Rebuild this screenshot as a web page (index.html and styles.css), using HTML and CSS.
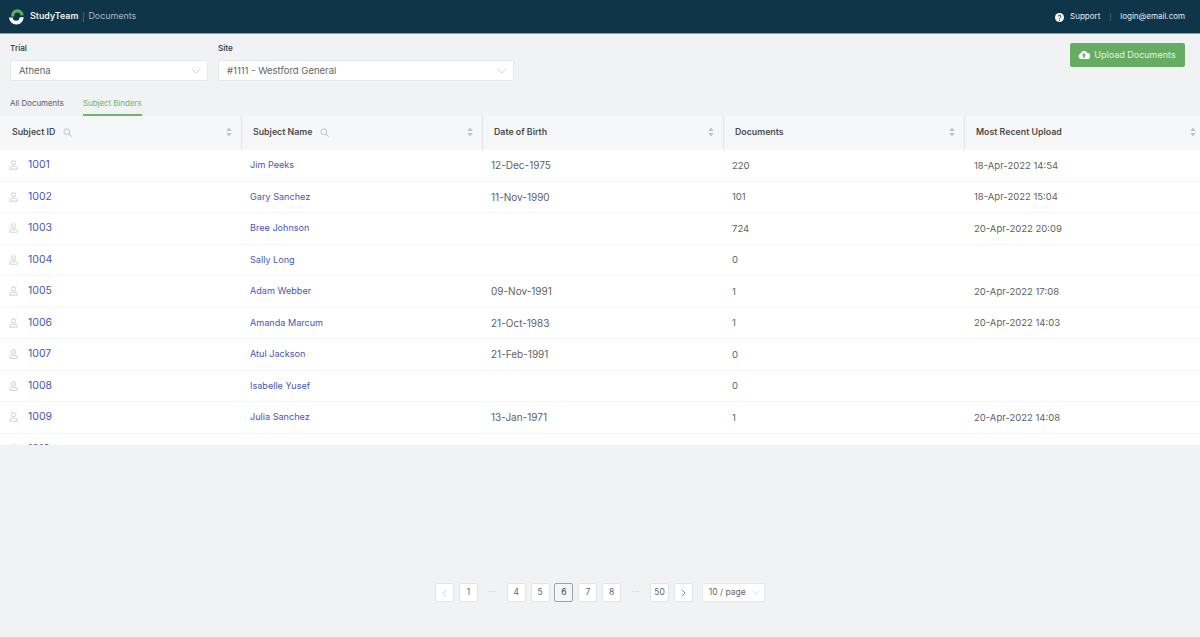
FILE: index.html
```html
<!DOCTYPE html>
<html lang="en">
<head>
<meta charset="utf-8">
<title>StudyTeam Documents</title>
<link rel="stylesheet" href="styles.css">
</head>
<body>
<svg class="defs" width="0" height="0" aria-hidden="true">
  <symbol id="user" viewBox="0 0 10 11"><circle cx="5" cy="3" r="2.3" fill="none" stroke="currentColor" stroke-width=".8"/><path d="M1 10.2V9c0-1.3 1-2.1 2.2-2.1h3.6C8 6.900 9 7.700 9 9v1.200z" fill="none" stroke="currentColor" stroke-width=".8"/></symbol>
  <symbol id="search" viewBox="0 0 10 10"><circle cx="4.200" cy="4.200" r="3.200" fill="none" stroke="currentColor" stroke-width="1"/><path d="M6.600 6.600L9.400 9.400" stroke="currentColor" stroke-width="1.100"/></symbol>
  <symbol id="sort" viewBox="0 0 6 10"><path d="M3 .5L5.700 4H.3zM3 9.500L.3 6h5.400z" fill="currentColor"/></symbol>
  <symbol id="chev" viewBox="0 0 12 7"><path d="M1 1l5 5 5-5" fill="none" stroke="currentColor" stroke-width="1"/></symbol>
  <symbol id="left" viewBox="0 0 6 10"><path d="M5 1L1 5l4 4" fill="none" stroke="currentColor" stroke-width="1"/></symbol>
  <symbol id="right" viewBox="0 0 6 10"><path d="M1 1l4 4-4 4" fill="none" stroke="currentColor" stroke-width="1"/></symbol>
</svg>
<header class="topbar">
  <div class="brand">
    <svg class="logo" width="16" height="16" viewBox="0 0 16 16"><path d="M3.700 7.600V6.600a4.700 4.700 0 0 1 9.400-.2" fill="none" stroke="#5cb05f" stroke-width="3.200"/><path d="M0 8.500H3.800A3.300 3.300 0 0 0 10.400 8.500L14.600 8A7.300 7.300 0 0 1 0 8.500z" fill="#fff"/></svg>
    <span class="brand-name">StudyTeam</span>
    <span class="brand-sep"></span>
    <span class="brand-page">Documents</span>
  </div>
  <nav class="topnav">
    <svg class="help" width="9" height="9" viewBox="0 0 10 10"><circle cx="5" cy="5" r="5" fill="#fff"/><path d="M3.500 3.900A1.500 1.500 0 1 1 5.600 5.300C5.100 5.600 5 5.800 5 6.300" fill="none" stroke="#0e3549" stroke-width="1.100"/><circle cx="5" cy="7.800" r=".7" fill="#0e3549"/></svg>
    <span>Support</span>
    <span class="nav-sep"></span>
    <span>login@email.com</span>
  </nav>
</header>
<main class="page">
  <section class="filters">
    <div class="field field-trial">
      <label class="field-label">Trial</label>
      <div class="select"><span>Athena</span><svg class="chev"><use href="#chev"/></svg></div>
    </div>
    <div class="field field-site">
      <label class="field-label">Site</label>
      <div class="select"><span>#1111 - Westford General</span><svg class="chev"><use href="#chev"/></svg></div>
    </div>
    <button class="upload" type="button">
      <svg width="12" height="9" viewBox="0 0 12 9"><path d="M3 9A2.700 2.700 0 0 1 2.500 3.700 3.700 3.700 0 0 1 9.400 3 3 3 0 0 1 9.300 9z" fill="#fff"/><path d="M6 3l2.200 2.400H6.800V8H5.200V5.400H3.800z" fill="#65ad62"/></svg>
      Upload Documents
    </button>
  </section>
  <nav class="tabs">
    <a class="tab">All Documents</a>
    <a class="tab tab-active">Subject Binders</a>
  </nav>
  <section class="table">
    <div class="row head">
      <div class="th"><span>Subject ID</span><svg class="search"><use href="#search"/></svg><svg class="sort"><use href="#sort"/></svg></div>
      <div class="th"><span>Subject Name</span><svg class="search"><use href="#search"/></svg><svg class="sort"><use href="#sort"/></svg></div>
      <div class="th"><span>Date of Birth</span><svg class="sort"><use href="#sort"/></svg></div>
      <div class="th"><span>Documents</span><svg class="sort"><use href="#sort"/></svg></div>
      <div class="th"><span>Most Recent Upload</span><svg class="sort"><use href="#sort"/></svg></div>
    </div>
    <div class="row"><div class="td id"><svg class="user"><use href="#user"/></svg><a>1001</a></div><div class="td"><a>Jim Peeks</a></div><div class="td dob">12-Dec-1975</div><div class="td">220</div><div class="td">18-Apr-2022 14:54</div></div>
    <div class="row"><div class="td id"><svg class="user"><use href="#user"/></svg><a>1002</a></div><div class="td"><a>Gary Sanchez</a></div><div class="td dob">11-Nov-1990</div><div class="td">101</div><div class="td">18-Apr-2022 15:04</div></div>
    <div class="row"><div class="td id"><svg class="user"><use href="#user"/></svg><a>1003</a></div><div class="td"><a>Bree Johnson</a></div><div class="td dob"></div><div class="td">724</div><div class="td">20-Apr-2022 20:09</div></div>
    <div class="row"><div class="td id"><svg class="user"><use href="#user"/></svg><a>1004</a></div><div class="td"><a>Sally Long</a></div><div class="td dob"></div><div class="td">0</div><div class="td"></div></div>
    <div class="row"><div class="td id"><svg class="user"><use href="#user"/></svg><a>1005</a></div><div class="td"><a>Adam Webber</a></div><div class="td dob">09-Nov-1991</div><div class="td">1</div><div class="td">20-Apr-2022 17:08</div></div>
    <div class="row"><div class="td id"><svg class="user"><use href="#user"/></svg><a>1006</a></div><div class="td"><a>Amanda Marcum</a></div><div class="td dob">21-Oct-1983</div><div class="td">1</div><div class="td">20-Apr-2022 14:03</div></div>
    <div class="row"><div class="td id"><svg class="user"><use href="#user"/></svg><a>1007</a></div><div class="td"><a>Atul Jackson</a></div><div class="td dob">21-Feb-1991</div><div class="td">0</div><div class="td"></div></div>
    <div class="row"><div class="td id"><svg class="user"><use href="#user"/></svg><a>1008</a></div><div class="td"><a>Isabelle Yusef</a></div><div class="td dob"></div><div class="td">0</div><div class="td"></div></div>
    <div class="row"><div class="td id"><svg class="user"><use href="#user"/></svg><a>1009</a></div><div class="td"><a>Julia Sanchez</a></div><div class="td dob">13-Jan-1971</div><div class="td">1</div><div class="td">20-Apr-2022 14:08</div></div>
    <div class="row"><div class="td id"><svg class="user"><use href="#user"/></svg><a>1010</a></div><div class="td"><a>Kabir Hamed</a></div><div class="td dob">10-Sep-1988</div><div class="td">0</div><div class="td"></div></div>
  </section>
  <nav class="pager">
    <span class="pg muted"><svg class="arrow"><use href="#left"/></svg></span>
    <span class="pg">1</span>
    <span class="dots">•••</span>
    <span class="pg">4</span>
    <span class="pg">5</span>
    <span class="pg current">6</span>
    <span class="pg">7</span>
    <span class="pg">8</span>
    <span class="dots">•••</span>
    <span class="pg">50</span>
    <span class="pg"><svg class="arrow"><use href="#right"/></svg></span>
    <span class="size">10 / page<svg class="chev"><use href="#chev"/></svg></span>
  </nav>
</main>
</body>
</html>
```
FILE: styles.css
```css
* { box-sizing: border-box; }
html, body { margin: 0; height: 100%; }
body {
  display: flex;
  flex-direction: column;
  height: 637px;
  overflow: hidden;
  background: #f0f2f4;
  color: #5c5c5c;
  font: 400 9.5px/1.2 Inter, "Liberation Sans", sans-serif;
}
.defs { position: absolute; }
.topbar {
  flex: none;
  height: 34px;
  padding: 0 15px 0 9px;
  display: flex;
  align-items: center;
  justify-content: space-between;
  background: #0e3549;
  border-bottom: 1px solid #8c9ba5;
}
.brand, .topnav { display: flex; align-items: center; }
.logo { margin-right: 5px; }
.brand-name { color: #eef1f3; font-size: 8.9px; font-weight: 600; }
.brand-sep { width: 1px; height: 10px; margin: 0 4px 0 5px; background: #47636f; }
.brand-page { color: #a9b7bf; font-size: 8.9px; }
.topnav { padding-top: 1px; color: #e8ecee; font-size: 8px; }
.help { margin-right: 6px; }
.nav-sep { width: 1px; height: 8px; margin: 0 9px 0 10px; background: #3d5b69; }
.page { flex: 1; min-height: 0; display: flex; flex-direction: column; }
.filters { flex: none; height: 48px; padding: 9px 15px 0 10px; display: flex; align-items: flex-start; }
.field { display: flex; flex-direction: column; gap: 6px; }
.field-trial { width: 198px; margin-right: 10px; }
.field-site { width: 296px; }
.field-label { color: #333; font-size: 8.2px; font-weight: 500; line-height: 11px; }
.select {
  height: 21px;
  padding: 0 6px 0 8px;
  display: flex;
  align-items: center;
  justify-content: space-between;
  background: #fff;
  border: 1px solid #e6e8ea;
  border-radius: 2px;
  color: #666;
  font-size: 9.5px;
}
.chev { width: 10px; height: 6px; color: #c8cbce; }
.upload {
  margin-left: auto;
  width: 115px;
  height: 24px;
  padding: 0 1px 1px 0;
  display: flex;
  align-items: center;
  justify-content: center;
  gap: 4px;
  background: #65ad62;
  border: 0;
  border-radius: 2px;
  color: #e6f2e5;
  font: 400 9px Inter, "Liberation Sans", sans-serif;
}
.tabs { flex: none; height: 34px; padding: 0 0 0 10px; display: flex; gap: 19px; align-items: flex-end; }
.tab { height: 24px; padding-top: 6px; color: #5c5c5c; font-size: 7.9px; line-height: 11px; }
.tab-active { color: #6cb56a; border-bottom: 2px solid #6cb56a; }
.table { flex: none; height: 329px; overflow: hidden; background: #fff; }
.row {
  height: 31.5px;
  display: grid;
  grid-template-columns: 242px 241px 241px 241px 1fr;
  border-bottom: 1px solid #f2f3f4;
}
.head { height: 34px; background: #f6f7f8; border-bottom: 0; }
.th {
  padding: 0 9px 2px 11px;
  display: flex;
  align-items: center;
  gap: 8px;
  color: #4d4d4d;
  font-size: 8.8px;
  font-weight: 600;
  border-right: 1px solid #dfe1e3;
}
.th:first-child { padding-left: 12px; }
.th:last-child { padding-right: 4px; border-right: 0; }
.search { width: 9px; height: 9px; color: #b8babc; }
.sort { width: 6px; height: 10px; margin-left: auto; color: #bfc1c3; }
.td { padding-left: 8px; display: flex; align-items: center; font-size: 9.5px; color: #5f5f5f; }
.td:last-child { padding-left: 9px; }
.td a { padding-top: 1px; color: #4a55b8; font-size: 9.1px; }
.dob { font-size: 10px; }
.id { padding-left: 9px; gap: 10px; }
.id a { font-size: 10.5px; }
.user { width: 9px; height: 10px; color: #bdbdbd; }
.pager {
  flex: none;
  margin-top: 138px;
  padding-left: 435px;
  display: flex;
  align-items: center;
  gap: 4.9px;
  font-size: 8.5px;
}
.pg {
  flex: none;
  width: 19px;
  height: 19px;
  display: flex;
  align-items: center;
  justify-content: center;
  background: #fff;
  border: 1px solid #e2e4e6;
  border-radius: 2px;
  color: #666;
}
.pg.muted { color: #c6c8ca; }
.pg.current { background: #f3f5f7; border-color: #9aa3ab; color: #444; }
.arrow { width: 5px; height: 8px; }
.dots { flex: none; width: 19px; text-align: center; color: #c9cbcd; font-size: 3.5px; letter-spacing: 1px; }
.size {
  flex: none;
  width: 63px;
  height: 19px;
  margin-left: 4px;
  padding: 0 4px 0 6px;
  display: flex;
  align-items: center;
  justify-content: space-between;
  background: #fff;
  border: 1px solid #e6e8ea;
  border-radius: 2px;
  color: #666;
}
.size .chev { width: 8px; height: 5px; }
```
